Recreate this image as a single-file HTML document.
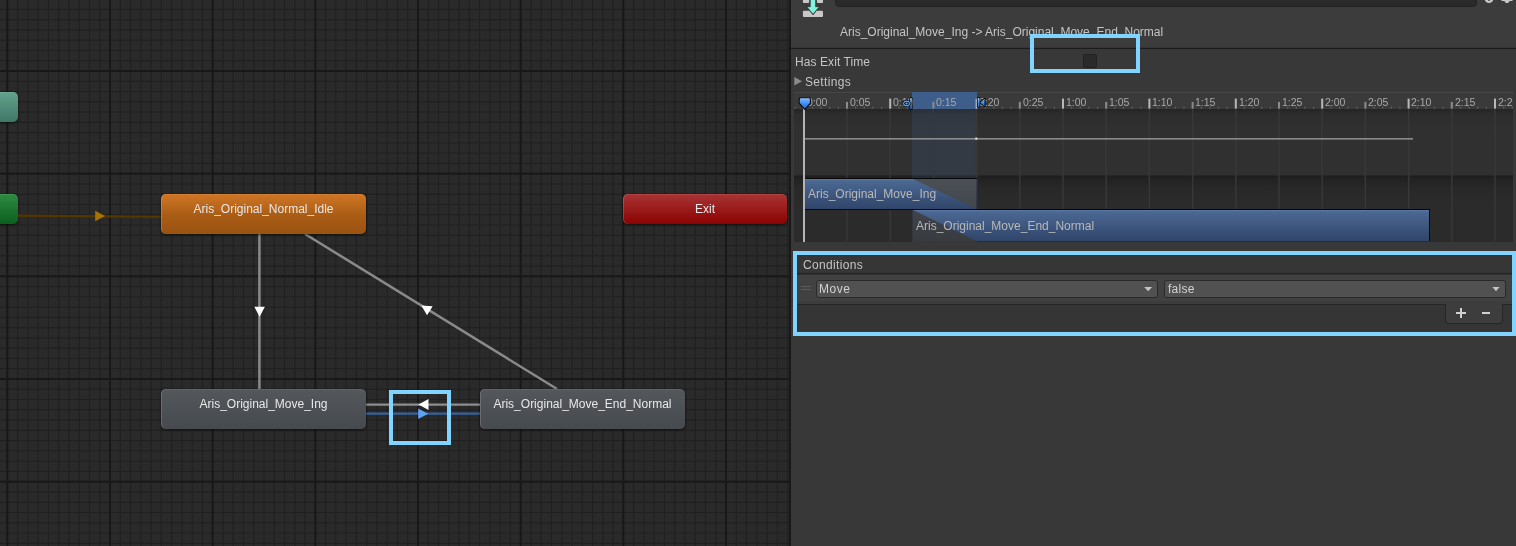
<!DOCTYPE html>
<html><head><meta charset="utf-8">
<style>
*{box-sizing:border-box;margin:0;padding:0}
html,body{width:1516px;height:546px;overflow:hidden;background:#3c3c3c;font-family:"Liberation Sans",sans-serif;font-size:12px;color:#c4c4c4}
.abs{position:absolute}
.node{position:absolute;border-radius:5px;color:#e8e8e8;text-align:center;font-size:12px;line-height:12px;box-shadow:inset 1px 0 0 rgba(255,255,255,.16),inset 0 1px 0 rgba(255,255,255,.07),0 1px 3px rgba(0,0,0,.55)}
.gray{background:linear-gradient(#54575c,#46494e)}
.cy{position:absolute;border:4px solid #80d4ff}
.lbl{position:absolute;white-space:pre;line-height:12px;will-change:transform}
</style></head><body>
<div class="abs" style="left:0;top:0;width:789px;height:546px;background:#2a2a2a;overflow:hidden">
<svg class="abs" style="left:0;top:0" width="789" height="546" viewBox="0 0 789 546">
<rect x="17.10" y="0" width="1" height="546" fill="#202020"/>
<rect x="27.37" y="0" width="1" height="546" fill="#202020"/>
<rect x="37.63" y="0" width="1" height="546" fill="#202020"/>
<rect x="47.90" y="0" width="1" height="546" fill="#202020"/>
<rect x="58.17" y="0" width="1" height="546" fill="#202020"/>
<rect x="68.43" y="0" width="1" height="546" fill="#202020"/>
<rect x="78.70" y="0" width="1" height="546" fill="#202020"/>
<rect x="88.97" y="0" width="1" height="546" fill="#202020"/>
<rect x="99.23" y="0" width="1" height="546" fill="#202020"/>
<rect x="119.77" y="0" width="1" height="546" fill="#202020"/>
<rect x="130.03" y="0" width="1" height="546" fill="#202020"/>
<rect x="140.30" y="0" width="1" height="546" fill="#202020"/>
<rect x="150.57" y="0" width="1" height="546" fill="#202020"/>
<rect x="160.83" y="0" width="1" height="546" fill="#202020"/>
<rect x="171.10" y="0" width="1" height="546" fill="#202020"/>
<rect x="181.37" y="0" width="1" height="546" fill="#202020"/>
<rect x="191.63" y="0" width="1" height="546" fill="#202020"/>
<rect x="201.90" y="0" width="1" height="546" fill="#202020"/>
<rect x="222.43" y="0" width="1" height="546" fill="#202020"/>
<rect x="232.70" y="0" width="1" height="546" fill="#202020"/>
<rect x="242.97" y="0" width="1" height="546" fill="#202020"/>
<rect x="253.23" y="0" width="1" height="546" fill="#202020"/>
<rect x="263.50" y="0" width="1" height="546" fill="#202020"/>
<rect x="273.77" y="0" width="1" height="546" fill="#202020"/>
<rect x="284.03" y="0" width="1" height="546" fill="#202020"/>
<rect x="294.30" y="0" width="1" height="546" fill="#202020"/>
<rect x="304.57" y="0" width="1" height="546" fill="#202020"/>
<rect x="325.10" y="0" width="1" height="546" fill="#202020"/>
<rect x="335.37" y="0" width="1" height="546" fill="#202020"/>
<rect x="345.63" y="0" width="1" height="546" fill="#202020"/>
<rect x="355.90" y="0" width="1" height="546" fill="#202020"/>
<rect x="366.17" y="0" width="1" height="546" fill="#202020"/>
<rect x="376.43" y="0" width="1" height="546" fill="#202020"/>
<rect x="386.70" y="0" width="1" height="546" fill="#202020"/>
<rect x="396.97" y="0" width="1" height="546" fill="#202020"/>
<rect x="407.23" y="0" width="1" height="546" fill="#202020"/>
<rect x="427.77" y="0" width="1" height="546" fill="#202020"/>
<rect x="438.03" y="0" width="1" height="546" fill="#202020"/>
<rect x="448.30" y="0" width="1" height="546" fill="#202020"/>
<rect x="458.57" y="0" width="1" height="546" fill="#202020"/>
<rect x="468.83" y="0" width="1" height="546" fill="#202020"/>
<rect x="479.10" y="0" width="1" height="546" fill="#202020"/>
<rect x="489.37" y="0" width="1" height="546" fill="#202020"/>
<rect x="499.63" y="0" width="1" height="546" fill="#202020"/>
<rect x="509.90" y="0" width="1" height="546" fill="#202020"/>
<rect x="530.43" y="0" width="1" height="546" fill="#202020"/>
<rect x="540.70" y="0" width="1" height="546" fill="#202020"/>
<rect x="550.97" y="0" width="1" height="546" fill="#202020"/>
<rect x="561.23" y="0" width="1" height="546" fill="#202020"/>
<rect x="571.50" y="0" width="1" height="546" fill="#202020"/>
<rect x="581.77" y="0" width="1" height="546" fill="#202020"/>
<rect x="592.03" y="0" width="1" height="546" fill="#202020"/>
<rect x="602.30" y="0" width="1" height="546" fill="#202020"/>
<rect x="612.57" y="0" width="1" height="546" fill="#202020"/>
<rect x="633.10" y="0" width="1" height="546" fill="#202020"/>
<rect x="643.37" y="0" width="1" height="546" fill="#202020"/>
<rect x="653.64" y="0" width="1" height="546" fill="#202020"/>
<rect x="663.90" y="0" width="1" height="546" fill="#202020"/>
<rect x="674.17" y="0" width="1" height="546" fill="#202020"/>
<rect x="684.44" y="0" width="1" height="546" fill="#202020"/>
<rect x="694.70" y="0" width="1" height="546" fill="#202020"/>
<rect x="704.97" y="0" width="1" height="546" fill="#202020"/>
<rect x="715.24" y="0" width="1" height="546" fill="#202020"/>
<rect x="735.77" y="0" width="1" height="546" fill="#202020"/>
<rect x="746.04" y="0" width="1" height="546" fill="#202020"/>
<rect x="756.30" y="0" width="1" height="546" fill="#202020"/>
<rect x="766.57" y="0" width="1" height="546" fill="#202020"/>
<rect x="776.84" y="0" width="1" height="546" fill="#202020"/>
<rect x="787.10" y="0" width="1" height="546" fill="#202020"/>
<rect x="0" y="-1.37" width="789" height="1" fill="#202020"/>
<rect x="0" y="8.90" width="789" height="1" fill="#202020"/>
<rect x="0" y="19.17" width="789" height="1" fill="#202020"/>
<rect x="0" y="29.43" width="789" height="1" fill="#202020"/>
<rect x="0" y="39.70" width="789" height="1" fill="#202020"/>
<rect x="0" y="49.97" width="789" height="1" fill="#202020"/>
<rect x="0" y="60.23" width="789" height="1" fill="#202020"/>
<rect x="0" y="80.77" width="789" height="1" fill="#202020"/>
<rect x="0" y="91.03" width="789" height="1" fill="#202020"/>
<rect x="0" y="101.30" width="789" height="1" fill="#202020"/>
<rect x="0" y="111.57" width="789" height="1" fill="#202020"/>
<rect x="0" y="121.83" width="789" height="1" fill="#202020"/>
<rect x="0" y="132.10" width="789" height="1" fill="#202020"/>
<rect x="0" y="142.37" width="789" height="1" fill="#202020"/>
<rect x="0" y="152.63" width="789" height="1" fill="#202020"/>
<rect x="0" y="162.90" width="789" height="1" fill="#202020"/>
<rect x="0" y="183.43" width="789" height="1" fill="#202020"/>
<rect x="0" y="193.70" width="789" height="1" fill="#202020"/>
<rect x="0" y="203.97" width="789" height="1" fill="#202020"/>
<rect x="0" y="214.23" width="789" height="1" fill="#202020"/>
<rect x="0" y="224.50" width="789" height="1" fill="#202020"/>
<rect x="0" y="234.77" width="789" height="1" fill="#202020"/>
<rect x="0" y="245.03" width="789" height="1" fill="#202020"/>
<rect x="0" y="255.30" width="789" height="1" fill="#202020"/>
<rect x="0" y="265.57" width="789" height="1" fill="#202020"/>
<rect x="0" y="286.10" width="789" height="1" fill="#202020"/>
<rect x="0" y="296.37" width="789" height="1" fill="#202020"/>
<rect x="0" y="306.63" width="789" height="1" fill="#202020"/>
<rect x="0" y="316.90" width="789" height="1" fill="#202020"/>
<rect x="0" y="327.17" width="789" height="1" fill="#202020"/>
<rect x="0" y="337.43" width="789" height="1" fill="#202020"/>
<rect x="0" y="347.70" width="789" height="1" fill="#202020"/>
<rect x="0" y="357.97" width="789" height="1" fill="#202020"/>
<rect x="0" y="368.23" width="789" height="1" fill="#202020"/>
<rect x="0" y="388.77" width="789" height="1" fill="#202020"/>
<rect x="0" y="399.03" width="789" height="1" fill="#202020"/>
<rect x="0" y="409.30" width="789" height="1" fill="#202020"/>
<rect x="0" y="419.57" width="789" height="1" fill="#202020"/>
<rect x="0" y="429.83" width="789" height="1" fill="#202020"/>
<rect x="0" y="440.10" width="789" height="1" fill="#202020"/>
<rect x="0" y="450.37" width="789" height="1" fill="#202020"/>
<rect x="0" y="460.63" width="789" height="1" fill="#202020"/>
<rect x="0" y="470.90" width="789" height="1" fill="#202020"/>
<rect x="0" y="491.43" width="789" height="1" fill="#202020"/>
<rect x="0" y="501.70" width="789" height="1" fill="#202020"/>
<rect x="0" y="511.97" width="789" height="1" fill="#202020"/>
<rect x="0" y="522.23" width="789" height="1" fill="#202020"/>
<rect x="0" y="532.50" width="789" height="1" fill="#202020"/>
<rect x="0" y="542.77" width="789" height="1" fill="#202020"/>
<rect x="6.33" y="0" width="2" height="546" fill="#181818"/>
<rect x="109.00" y="0" width="2" height="546" fill="#181818"/>
<rect x="211.67" y="0" width="2" height="546" fill="#181818"/>
<rect x="314.33" y="0" width="2" height="546" fill="#181818"/>
<rect x="417.00" y="0" width="2" height="546" fill="#181818"/>
<rect x="519.67" y="0" width="2" height="546" fill="#181818"/>
<rect x="622.34" y="0" width="2" height="546" fill="#181818"/>
<rect x="725.00" y="0" width="2" height="546" fill="#181818"/>
<rect x="0" y="70.00" width="789" height="2" fill="#181818"/>
<rect x="0" y="172.67" width="789" height="2" fill="#181818"/>
<rect x="0" y="275.33" width="789" height="2" fill="#181818"/>
<rect x="0" y="378.00" width="789" height="2" fill="#181818"/>
<rect x="0" y="480.67" width="789" height="2" fill="#181818"/>
</svg>
<!-- nodes -->
<div class="node" style="left:-40px;top:92px;width:58px;height:30px;background:linear-gradient(#62a28d,#3f7766)"></div>
<div class="node" style="left:-40px;top:194px;width:58px;height:30px;background:linear-gradient(#2f8b42,#0b5f1f)"></div>
<svg class="abs" style="left:0;top:0" width="789" height="546" viewBox="0 0 789 546">
<line x1="18" y1="215.7" x2="161" y2="216.8" stroke="#553600" stroke-width="2.2"/>
<polygon points="105.17,216.00 95.17,221.25 95.17,210.75" fill="#a87100"/>
<line x1="259.4" y1="234" x2="259.4" y2="389" stroke="#8a8a8a" stroke-width="2.5"/>
<polygon points="259.60,316.67 254.30,306.67 264.90,306.67" fill="#fff"/>
<line x1="305" y1="234" x2="557" y2="389" stroke="#8a8a8a" stroke-width="2.5"/>
<polygon points="421.32,305.51 432.62,306.23 427.06,315.26" fill="#fff"/>
<line x1="366" y1="404.6" x2="480" y2="404.6" stroke="#8e8e8e" stroke-width="2.2"/>
<line x1="366" y1="413.6" x2="480" y2="413.6" stroke="#36629a" stroke-width="2.4"/>
<polygon points="418.53,404.60 428.53,399.10 428.53,410.10" fill="#fff"/>
<polygon points="428.17,413.70 418.17,419.00 418.17,408.40" fill="#5ea2f2"/>
</svg>
<div class="node" style="left:161px;top:194px;width:205px;height:40px;background:linear-gradient(#d07624,#a95c15 55%,#9a5310)"><span class="lbl" style="left:0;right:0;top:9px">Aris_Original_Normal_Idle</span></div>
<div class="node" style="left:623px;top:194px;width:164px;height:30px;background:linear-gradient(#a83434,#8c0202)"><span class="lbl" style="left:0;right:0;top:9px">Exit</span></div>
<div class="node gray" style="left:161px;top:389px;width:205px;height:40px"><span class="lbl" style="left:0;right:0;top:9px">Aris_Original_Move_Ing</span></div>
<div class="node gray" style="left:480px;top:389px;width:205px;height:40px"><span class="lbl" style="left:0;right:0;top:9px">Aris_Original_Move_End_Normal</span></div>
<div class="cy" style="left:389px;top:390px;width:62px;height:55px"></div>
</div>
<div class="abs" style="left:789px;top:0;width:2px;height:546px;background:#191919"></div>
<!-- right panel -->
<div class="abs" style="left:791.00px;top:0.00px;width:725.00px;height:48.00px;background:#3c3c3c;"></div>
<div class="abs" style="left:791.00px;top:48.00px;width:725.00px;height:498.00px;background:#383838;"></div>
<div class="abs" style="left:835.00px;top:-10.00px;width:642.00px;height:16.60px;background:#2a2a2a;border-radius:4px;border:1px solid #232323"></div>
<svg class="abs" style="left:800px;top:0" width="26" height="20" viewBox="0 0 26 20">
<rect x="2.9" y="-3" width="6.2" height="6" rx="1" fill="#c8c8c8"/>
<rect x="16.9" y="-3" width="6.1" height="6" rx="1" fill="#c8c8c8"/>
<rect x="2.9" y="10.8" width="20.1" height="6.3" rx="1" fill="#c8c8c8"/>
<polygon points="6.2,6 19.8,6 13,14.8" fill="#363636" stroke="#363636" stroke-width="1" stroke-linejoin="round"/>
<rect x="10.7" y="-1" width="4.5" height="9" fill="#80f4de"/>
<polygon points="7.9,7.3 18.2,7.3 13,13.4" fill="#80f4de" stroke="#80f4de" stroke-width="0.5" stroke-linejoin="round"/>
</svg>
<svg class="abs" style="left:1480px;top:0" width="36" height="8" viewBox="0 0 36 8">
<ellipse cx="9" cy="-1" rx="4.3" ry="4" fill="#c8c8c8"/>
<rect x="8.3" y="-2" width="1.4" height="3" fill="#3c3c3c"/>
<circle cx="27" cy="-2" r="4.2" fill="#c8c8c8"/>
<rect x="25.5" y="-2" width="3" height="5" fill="#c8c8c8"/>
<rect x="21.5" y="-2" width="11" height="3" fill="#c8c8c8"/>
</svg>
<div class="lbl" style="left:840.40px;top:25.64px;font-size:12px;line-height:12px;color:#c4c4c4;">Aris_Original_Move_Ing -&gt; Aris_Original_Move_End_Normal</div>
<svg class="abs" style="left:791px;top:0" width="725" height="60"><rect x="0" y="47.8" width="725" height="1.2" fill="#1b1b1b"/></svg>
<div class="lbl" style="left:794.90px;top:55.84px;font-size:12px;line-height:12px;color:#c4c4c4;letter-spacing:0.08px">Has Exit Time</div>
<div class="abs" style="left:1083.00px;top:54.00px;width:13.50px;height:13.50px;background:#2a2a2a;border:1px solid #222;border-radius:2px"></div>
<svg class="abs" style="left:790px;top:72px" width="16" height="16" viewBox="0 0 16 16"><polygon points="4.3,5 12,9.3 4.3,13.6" fill="#8b8b8b"/></svg>
<div class="lbl" style="left:804.70px;top:76.34px;font-size:12px;line-height:12px;color:#c4c4c4;letter-spacing:0.33px">Settings</div>
<div class="abs" style="left:794.20px;top:92.40px;width:719.20px;height:149.20px;background:#2e2e2e;"></div>
<div class="abs" style="left:794.20px;top:92.40px;width:719.20px;height:16.60px;background:#3a3a3a;border-top:1px solid #474747"></div>
<div class="abs" style="left:794.20px;top:109.00px;width:719.20px;height:67.00px;background:linear-gradient(#242424 0px,#2d2d2d 6px,#303030 20px);"></div>
<div class="abs" style="left:794.20px;top:175.00px;width:719.20px;height:66.60px;background:linear-gradient(#2a2a2a 0px,#1f1f1f 1.5px,#222 4px,#282828 12px,#2b2b2b 30px);"></div>
<div class="abs" style="left:911.90px;top:92.40px;width:65.00px;height:16.60px;background:#3d5d8b;"></div>
<div class="abs" style="left:911.90px;top:109.00px;width:65.00px;height:132.60px;background:rgba(70,110,175,0.16);"></div>
<svg class="abs" style="left:794.2px;top:92.4px" width="719.20" height="149.20"><rect x="0.56" y="14.60" width="1.2" height="2.2" fill="#5e5e5e"/><rect x="9.10" y="16.60" width="1.4" height="132.60" fill="#383838"/><rect x="17.84" y="14.60" width="1.2" height="2.2" fill="#5e5e5e"/><rect x="26.48" y="14.60" width="1.2" height="2.2" fill="#5e5e5e"/><rect x="35.12" y="14.60" width="1.2" height="2.2" fill="#5e5e5e"/><rect x="43.76" y="14.60" width="1.2" height="2.2" fill="#5e5e5e"/><rect x="8.80" y="6.60" width="2" height="10" fill="#b8b8b8"/><rect x="52.30" y="16.60" width="1.4" height="132.60" fill="#383838"/><rect x="61.04" y="14.60" width="1.2" height="2.2" fill="#5e5e5e"/><rect x="69.68" y="14.60" width="1.2" height="2.2" fill="#5e5e5e"/><rect x="78.32" y="14.60" width="1.2" height="2.2" fill="#5e5e5e"/><rect x="86.96" y="14.60" width="1.2" height="2.2" fill="#5e5e5e"/><rect x="52.00" y="9.90" width="2" height="6.7" fill="#8c8c8c"/><rect x="95.50" y="16.60" width="1.4" height="132.60" fill="#383838"/><rect x="104.24" y="14.60" width="1.2" height="2.2" fill="#5e5e5e"/><rect x="112.88" y="14.60" width="1.2" height="2.2" fill="#5e5e5e"/><rect x="121.52" y="14.60" width="1.2" height="2.2" fill="#5e5e5e"/><rect x="130.16" y="14.60" width="1.2" height="2.2" fill="#5e5e5e"/><rect x="95.20" y="6.60" width="2" height="10" fill="#b8b8b8"/><rect x="138.70" y="16.60" width="1.4" height="132.60" fill="#383838"/><rect x="147.44" y="14.60" width="1.2" height="2.2" fill="#5e5e5e"/><rect x="156.08" y="14.60" width="1.2" height="2.2" fill="#5e5e5e"/><rect x="164.72" y="14.60" width="1.2" height="2.2" fill="#5e5e5e"/><rect x="173.36" y="14.60" width="1.2" height="2.2" fill="#5e5e5e"/><rect x="138.40" y="9.90" width="2" height="6.7" fill="#8c8c8c"/><rect x="181.90" y="16.60" width="1.4" height="132.60" fill="#383838"/><rect x="190.64" y="14.60" width="1.2" height="2.2" fill="#5e5e5e"/><rect x="199.28" y="14.60" width="1.2" height="2.2" fill="#5e5e5e"/><rect x="207.92" y="14.60" width="1.2" height="2.2" fill="#5e5e5e"/><rect x="216.56" y="14.60" width="1.2" height="2.2" fill="#5e5e5e"/><rect x="181.60" y="6.60" width="2" height="10" fill="#b8b8b8"/><rect x="225.10" y="16.60" width="1.4" height="132.60" fill="#383838"/><rect x="233.84" y="14.60" width="1.2" height="2.2" fill="#5e5e5e"/><rect x="242.48" y="14.60" width="1.2" height="2.2" fill="#5e5e5e"/><rect x="251.12" y="14.60" width="1.2" height="2.2" fill="#5e5e5e"/><rect x="259.76" y="14.60" width="1.2" height="2.2" fill="#5e5e5e"/><rect x="224.80" y="9.90" width="2" height="6.7" fill="#8c8c8c"/><rect x="268.30" y="16.60" width="1.4" height="132.60" fill="#383838"/><rect x="277.04" y="14.60" width="1.2" height="2.2" fill="#5e5e5e"/><rect x="285.68" y="14.60" width="1.2" height="2.2" fill="#5e5e5e"/><rect x="294.32" y="14.60" width="1.2" height="2.2" fill="#5e5e5e"/><rect x="302.96" y="14.60" width="1.2" height="2.2" fill="#5e5e5e"/><rect x="268.00" y="6.60" width="2" height="10" fill="#b8b8b8"/><rect x="311.50" y="16.60" width="1.4" height="132.60" fill="#383838"/><rect x="320.24" y="14.60" width="1.2" height="2.2" fill="#5e5e5e"/><rect x="328.88" y="14.60" width="1.2" height="2.2" fill="#5e5e5e"/><rect x="337.52" y="14.60" width="1.2" height="2.2" fill="#5e5e5e"/><rect x="346.16" y="14.60" width="1.2" height="2.2" fill="#5e5e5e"/><rect x="311.20" y="9.90" width="2" height="6.7" fill="#8c8c8c"/><rect x="354.70" y="16.60" width="1.4" height="132.60" fill="#383838"/><rect x="363.44" y="14.60" width="1.2" height="2.2" fill="#5e5e5e"/><rect x="372.08" y="14.60" width="1.2" height="2.2" fill="#5e5e5e"/><rect x="380.72" y="14.60" width="1.2" height="2.2" fill="#5e5e5e"/><rect x="389.36" y="14.60" width="1.2" height="2.2" fill="#5e5e5e"/><rect x="354.40" y="6.60" width="2" height="10" fill="#b8b8b8"/><rect x="397.90" y="16.60" width="1.4" height="132.60" fill="#383838"/><rect x="406.64" y="14.60" width="1.2" height="2.2" fill="#5e5e5e"/><rect x="415.28" y="14.60" width="1.2" height="2.2" fill="#5e5e5e"/><rect x="423.92" y="14.60" width="1.2" height="2.2" fill="#5e5e5e"/><rect x="432.56" y="14.60" width="1.2" height="2.2" fill="#5e5e5e"/><rect x="397.60" y="9.90" width="2" height="6.7" fill="#8c8c8c"/><rect x="441.10" y="16.60" width="1.4" height="132.60" fill="#383838"/><rect x="449.84" y="14.60" width="1.2" height="2.2" fill="#5e5e5e"/><rect x="458.48" y="14.60" width="1.2" height="2.2" fill="#5e5e5e"/><rect x="467.12" y="14.60" width="1.2" height="2.2" fill="#5e5e5e"/><rect x="475.76" y="14.60" width="1.2" height="2.2" fill="#5e5e5e"/><rect x="440.80" y="6.60" width="2" height="10" fill="#b8b8b8"/><rect x="484.30" y="16.60" width="1.4" height="132.60" fill="#383838"/><rect x="493.04" y="14.60" width="1.2" height="2.2" fill="#5e5e5e"/><rect x="501.68" y="14.60" width="1.2" height="2.2" fill="#5e5e5e"/><rect x="510.32" y="14.60" width="1.2" height="2.2" fill="#5e5e5e"/><rect x="518.96" y="14.60" width="1.2" height="2.2" fill="#5e5e5e"/><rect x="484.00" y="9.90" width="2" height="6.7" fill="#8c8c8c"/><rect x="527.50" y="16.60" width="1.4" height="132.60" fill="#383838"/><rect x="536.24" y="14.60" width="1.2" height="2.2" fill="#5e5e5e"/><rect x="544.88" y="14.60" width="1.2" height="2.2" fill="#5e5e5e"/><rect x="553.52" y="14.60" width="1.2" height="2.2" fill="#5e5e5e"/><rect x="562.16" y="14.60" width="1.2" height="2.2" fill="#5e5e5e"/><rect x="527.20" y="6.60" width="2" height="10" fill="#b8b8b8"/><rect x="570.70" y="16.60" width="1.4" height="132.60" fill="#383838"/><rect x="579.44" y="14.60" width="1.2" height="2.2" fill="#5e5e5e"/><rect x="588.08" y="14.60" width="1.2" height="2.2" fill="#5e5e5e"/><rect x="596.72" y="14.60" width="1.2" height="2.2" fill="#5e5e5e"/><rect x="605.36" y="14.60" width="1.2" height="2.2" fill="#5e5e5e"/><rect x="570.40" y="9.90" width="2" height="6.7" fill="#8c8c8c"/><rect x="613.90" y="16.60" width="1.4" height="132.60" fill="#383838"/><rect x="622.64" y="14.60" width="1.2" height="2.2" fill="#5e5e5e"/><rect x="631.28" y="14.60" width="1.2" height="2.2" fill="#5e5e5e"/><rect x="639.92" y="14.60" width="1.2" height="2.2" fill="#5e5e5e"/><rect x="648.56" y="14.60" width="1.2" height="2.2" fill="#5e5e5e"/><rect x="613.60" y="6.60" width="2" height="10" fill="#b8b8b8"/><rect x="657.10" y="16.60" width="1.4" height="132.60" fill="#383838"/><rect x="665.84" y="14.60" width="1.2" height="2.2" fill="#5e5e5e"/><rect x="674.48" y="14.60" width="1.2" height="2.2" fill="#5e5e5e"/><rect x="683.12" y="14.60" width="1.2" height="2.2" fill="#5e5e5e"/><rect x="691.76" y="14.60" width="1.2" height="2.2" fill="#5e5e5e"/><rect x="656.80" y="9.90" width="2" height="6.7" fill="#8c8c8c"/><rect x="700.30" y="16.60" width="1.4" height="132.60" fill="#383838"/><rect x="709.04" y="14.60" width="1.2" height="2.2" fill="#5e5e5e"/><rect x="717.68" y="14.60" width="1.2" height="2.2" fill="#5e5e5e"/><rect x="700.00" y="6.60" width="2" height="10" fill="#b8b8b8"/></svg>
<div class="abs" style="left:794.2px;top:92.4px;width:719.20px;height:17px;overflow:hidden">
<div class="lbl" style="left:12.40px;top:4.41px;font-size:10.5px;line-height:10.5px;color:#a8a8a8;">0:00</div>
<div class="lbl" style="left:55.60px;top:4.41px;font-size:10.5px;line-height:10.5px;color:#a8a8a8;">0:05</div>
<div class="lbl" style="left:98.80px;top:4.41px;font-size:10.5px;line-height:10.5px;color:#a8a8a8;">0:10</div>
<div class="lbl" style="left:142.00px;top:4.41px;font-size:10.5px;line-height:10.5px;color:#a8a8a8;">0:15</div>
<div class="lbl" style="left:185.20px;top:4.41px;font-size:10.5px;line-height:10.5px;color:#a8a8a8;">0:20</div>
<div class="lbl" style="left:228.40px;top:4.41px;font-size:10.5px;line-height:10.5px;color:#a8a8a8;">0:25</div>
<div class="lbl" style="left:271.60px;top:4.41px;font-size:10.5px;line-height:10.5px;color:#a8a8a8;">1:00</div>
<div class="lbl" style="left:314.80px;top:4.41px;font-size:10.5px;line-height:10.5px;color:#a8a8a8;">1:05</div>
<div class="lbl" style="left:358.00px;top:4.41px;font-size:10.5px;line-height:10.5px;color:#a8a8a8;">1:10</div>
<div class="lbl" style="left:401.20px;top:4.41px;font-size:10.5px;line-height:10.5px;color:#a8a8a8;">1:15</div>
<div class="lbl" style="left:444.40px;top:4.41px;font-size:10.5px;line-height:10.5px;color:#a8a8a8;">1:20</div>
<div class="lbl" style="left:487.60px;top:4.41px;font-size:10.5px;line-height:10.5px;color:#a8a8a8;">1:25</div>
<div class="lbl" style="left:530.80px;top:4.41px;font-size:10.5px;line-height:10.5px;color:#a8a8a8;">2:00</div>
<div class="lbl" style="left:574.00px;top:4.41px;font-size:10.5px;line-height:10.5px;color:#a8a8a8;">2:05</div>
<div class="lbl" style="left:617.20px;top:4.41px;font-size:10.5px;line-height:10.5px;color:#a8a8a8;">2:10</div>
<div class="lbl" style="left:660.40px;top:4.41px;font-size:10.5px;line-height:10.5px;color:#a8a8a8;">2:15</div>
<div class="lbl" style="left:703.60px;top:4.41px;font-size:10.5px;line-height:10.5px;color:#a8a8a8;">2:20</div>
</div>
<svg class="abs" style="left:800px;top:130px" width="620" height="16"><rect x="4" y="8.2" width="609" height="1.3" fill="#a0a0a0"/><rect x="175.3" y="7.6" width="2" height="2" fill="#e8e8e8"/></svg>
<svg class="abs" style="left:804px;top:177px" width="630" height="66" viewBox="0 0 630 66">
<defs>
<linearGradient id="bl" x1="0" y1="0" x2="0" y2="1"><stop offset="0" stop-color="#5a7aa6"/><stop offset="0.06" stop-color="#4b6892"/><stop offset="1" stop-color="#30456a"/></linearGradient>
<linearGradient id="gy" x1="0" y1="0" x2="0" y2="1"><stop offset="0" stop-color="#4b4f56"/><stop offset="1" stop-color="#42464d"/></linearGradient>
<linearGradient id="gy2" x1="0" y1="0" x2="0" y2="1"><stop offset="0" stop-color="#40444a"/><stop offset="1" stop-color="#383b40"/></linearGradient>
</defs>
<rect x="1" y="1" width="172" height="32" fill="#070707"/>
<rect x="1" y="2" width="171.5" height="30" fill="url(#bl)"/>
<polygon points="109,2 172.5,2 172.5,32" fill="url(#gy)"/>
<rect x="109" y="32" width="517" height="32" fill="#070707"/>
<rect x="109" y="33" width="516" height="31" fill="url(#bl)"/>
<polygon points="109,33 172.5,64 109,64" fill="url(#gy2)"/>
</svg>
<div class="lbl" style="left:808.40px;top:187.84px;font-size:12px;line-height:12px;color:#b8b8b8;">Aris_Original_Move_Ing</div>
<div class="lbl" style="left:916.40px;top:219.84px;font-size:12px;line-height:12px;color:#b8b8b8;">Aris_Original_Move_End_Normal</div>
<div class="abs" style="left:803.00px;top:109.00px;width:2.00px;height:132.60px;background:#b4b4b4;"></div>
<svg class="abs" style="left:796px;top:95px" width="18" height="16" viewBox="0 0 18 16">
<defs><linearGradient id="ph" x1="0" y1="0" x2="0" y2="1"><stop offset="0" stop-color="#b0d6ff"/><stop offset="0.15" stop-color="#6fb0ff"/><stop offset="0.55" stop-color="#3a88f2"/><stop offset="1" stop-color="#1c6be4"/></linearGradient></defs>
<path d="M3.2,4.4 Q3.2,2.8 4.8,2.8 L12.9,2.8 Q14.4,2.8 14.4,4.4 L14.4,8.2 L8.8,14.4 L3.2,8.2 Z" fill="url(#ph)" stroke="#0c0c0c" stroke-width="1.1"/>
</svg>
<svg class="abs" style="left:900px;top:92px" width="90" height="18" viewBox="0 0 90 18">
<defs><linearGradient id="mk" x1="0" y1="0" x2="0" y2="1"><stop offset="0" stop-color="#b8dcff"/><stop offset="0.4" stop-color="#4a9af5"/><stop offset="1" stop-color="#1f6ae0"/></linearGradient></defs>
<rect x="9.4" y="5.3" width="3.2" height="12.4" rx="1.2" fill="#0a0a0a"/>
<rect x="10.2" y="6" width="1.6" height="11" rx="0.8" fill="url(#mk)"/>
<path d="M3.2,11.5 L5,9.4 L8.3,9.4 L10,11.5 L8.3,13.6 L5,13.6 Z" fill="none" stroke="#0a0a0a" stroke-width="2.4"/>
<path d="M3.2,11.5 L5,9.4 L8.3,9.4 L10,11.5 L8.3,13.6 L5,13.6 Z" fill="none" stroke="#5aa4f6" stroke-width="1.1"/>
<circle cx="6.6" cy="11.5" r="0.9" fill="#5aa4f6"/>
<polygon points="79.7,10.6 85,6 85,15" fill="url(#mk)" stroke="#0a0a0a" stroke-width="1"/>
<rect x="76.9" y="5.3" width="3.4" height="10.4" rx="1.2" fill="#0a0a0a"/>
<rect x="77.7" y="6" width="1.8" height="9" rx="0.8" fill="url(#mk)"/>
</svg>
<div class="abs" style="left:797.00px;top:255.00px;width:715.00px;height:76.00px;background:#353535;"></div>
<div class="abs" style="left:797.00px;top:255.00px;width:715.00px;height:18.00px;background:#363636;"></div>
<div class="lbl" style="left:802.60px;top:258.64px;font-size:12px;line-height:12px;color:#c4c4c4;letter-spacing:0.34px">Conditions</div>
<svg class="abs" style="left:797px;top:270px" width="715" height="8"><rect x="0" y="2.8" width="715" height="1.6" fill="#262626"/></svg>
<div class="abs" style="left:797.00px;top:275.00px;width:715.00px;height:26.00px;background:#414141;"></div>
<div class="abs" style="left:797.00px;top:301.00px;width:715.00px;height:3.00px;background:#3d3d3d;"></div>
<div class="abs" style="left:797.00px;top:304.00px;width:715.00px;height:1.00px;background:#262626;"></div>
<div class="abs" style="left:801.00px;top:286.00px;width:10.00px;height:1.00px;background:#5e5e5e;"></div>
<div class="abs" style="left:801.00px;top:289.00px;width:10.00px;height:1.00px;background:#5e5e5e;"></div>
<div class="abs" style="left:816.00px;top:280.00px;width:342.00px;height:18.00px;background:#515151;border:1px solid #2a2a2a;border-radius:3px"></div>
<div class="lbl" style="left:819.40px;top:282.84px;font-size:12px;line-height:12px;color:#d2d2d2;letter-spacing:0.5px">Move</div>
<svg class="abs" style="left:1140px;top:283px" width="16" height="12"><polygon points="4.2,3.9 12.1,3.9 8.15,8.3" fill="#c4c4c4"/></svg>
<div class="abs" style="left:1164.00px;top:280.00px;width:341.50px;height:18.00px;background:#515151;border:1px solid #2a2a2a;border-radius:3px"></div>
<div class="lbl" style="left:1168.00px;top:282.84px;font-size:12px;line-height:12px;color:#d2d2d2;letter-spacing:0.28px">false</div>
<svg class="abs" style="left:1488px;top:283px" width="16" height="12"><polygon points="4.4,4.1 11.6,4.1 8,8.3" fill="#c4c4c4"/></svg>
<div class="abs" style="left:1445.00px;top:304.00px;width:58.00px;height:19.50px;background:#3d3d3d;border:1px solid #262626;border-top:none;border-radius:0 0 4px 4px"></div>
<div class="abs" style="left:1455.90px;top:312.20px;width:10.00px;height:1.60px;background:#d0d0d0;"></div>
<div class="abs" style="left:1460.10px;top:308.00px;width:1.60px;height:10.00px;background:#d0d0d0;"></div>
<div class="abs" style="left:1482.00px;top:312.20px;width:8.00px;height:1.60px;background:#d0d0d0;"></div>
<div class="abs" style="left:1034.00px;top:37.00px;width:102.00px;height:6.00px;background:#3c3c3c;"></div>
<div class="cy" style="left:1030px;top:34px;width:110px;height:39px"></div>
<div class="cy" style="left:793px;top:251px;width:723px;height:85px"></div>
</body></html>
